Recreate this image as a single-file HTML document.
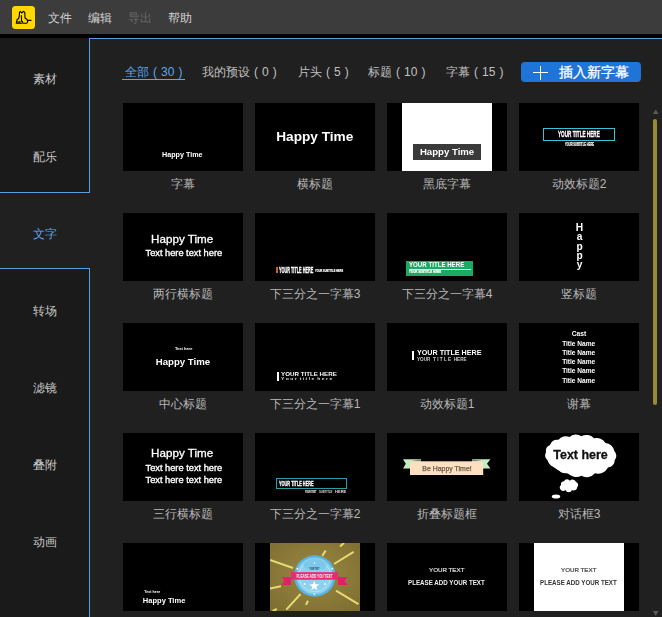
<!DOCTYPE html>
<html><head><meta charset="utf-8">
<style>
*{margin:0;padding:0;box-sizing:border-box}
html,body{width:662px;height:617px;overflow:hidden;background:#202020;font-family:"Liberation Sans",sans-serif;position:relative}
.a{position:absolute}
#menubar{left:0;top:0;width:662px;height:34px;background:#3c3c3c}
#blackstrip{left:0;top:34px;width:662px;height:4px;background:#000}
#side{left:0;top:38px;width:89px;height:579px;background:#1a1a1a}
.mi{position:absolute;top:12px;font-size:12px;line-height:12px;color:#d2d2d2;white-space:nowrap}
.si{position:absolute;left:0;width:89px;text-align:center;font-size:12px;line-height:12px;color:#c8c8c8}
.bl{position:absolute;background:#5a9edc}
.tab{position:absolute;top:66px;word-spacing:0.7px;font-size:12px;line-height:12px;color:#c0c0c0;white-space:nowrap}
.th{position:absolute;width:120px;height:68px;background:#000;overflow:hidden}
.tt{position:absolute;filter:blur(0.35px);white-space:nowrap;transform-origin:0 0;font-family:"Liberation Sans",sans-serif}
.cap{position:absolute;width:120px;text-align:center;font-size:12px;line-height:12px;color:#b8b8b8;white-space:nowrap}
</style></head><body>
<div id="menubar" class="a"></div>
<div id="blackstrip" class="a"></div>
<!-- logo -->
<div class="a" style="left:12px;top:6px;width:23.4px;height:23.4px;background:#ffd800;border-radius:3.5px"></div>
<div class="mi" style="left:48px">文件</div>
<div class="mi" style="left:88px">编辑</div>
<div class="mi" style="left:128px;color:#6a6a6a">导出</div>
<div class="mi" style="left:168px">帮助</div>

<div id="side" class="a"></div>
<div class="a" style="left:0;top:193px;width:89px;height:75px;background:#202020"></div>
<div class="bl" style="left:89px;top:38px;width:573px;height:1px"></div>
<div class="bl" style="left:89px;top:38px;width:1px;height:155px"></div>
<div class="bl" style="left:0;top:192px;width:90px;height:1px"></div>
<div class="bl" style="left:0;top:268px;width:90px;height:1px"></div>
<div class="bl" style="left:89px;top:268px;width:1px;height:349px"></div>

<div class="si" style="top:73px">素材</div>
<div class="si" style="top:151px">配乐</div>
<div class="si" style="top:228px;color:#5aa8ec">文字</div>
<div class="si" style="top:305px">转场</div>
<div class="si" style="top:382px">滤镜</div>
<div class="si" style="top:459px">叠附</div>
<div class="si" style="top:536px">动画</div>

<div class="tab" style="left:125px;color:#5aa8ec">全部 ( 30 )</div>
<div class="a" style="left:122px;top:79px;width:63px;height:1px;background:#5aa8ec"></div>
<div class="tab" style="left:202px">我的预设 ( 0 )</div>
<div class="tab" style="left:298px">片头 ( 5 )</div>
<div class="tab" style="left:368px">标题 ( 10 )</div>
<div class="tab" style="left:446px">字幕 ( 15 )</div>

<div class="a" style="left:521px;top:62px;width:120px;height:20px;background:#1f74d8;border-radius:4px"></div>

<!-- thumbnails -->
<div class="th" style="left:123px;top:103px"></div>
<div class="th" style="left:255px;top:103px"></div>
<div class="th" style="left:387px;top:103px"></div>
<div class="th" style="left:519px;top:103px"></div>
<div class="th" style="left:123px;top:213px"></div>
<div class="th" style="left:255px;top:213px"></div>
<div class="th" style="left:387px;top:213px"></div>
<div class="th" style="left:519px;top:213px"></div>
<div class="th" style="left:123px;top:323px"></div>
<div class="th" style="left:255px;top:323px"></div>
<div class="th" style="left:387px;top:323px"></div>
<div class="th" style="left:519px;top:323px"></div>
<div class="th" style="left:123px;top:433px"></div>
<div class="th" style="left:255px;top:433px"></div>
<div class="th" style="left:387px;top:433px"></div>
<div class="th" style="left:519px;top:433px"></div>
<div class="th" style="left:123px;top:543px"></div>
<div class="th" style="left:255px;top:543px"></div>
<div class="th" style="left:387px;top:543px"></div>
<div class="th" style="left:519px;top:543px"></div>

<div class="cap" style="left:123px;top:178px">字幕</div>
<div class="cap" style="left:255px;top:178px">横标题</div>
<div class="cap" style="left:387px;top:178px">黑底字幕</div>
<div class="cap" style="left:519px;top:178px">动效标题2</div>
<div class="cap" style="left:123px;top:288px">两行横标题</div>
<div class="cap" style="left:255px;top:288px">下三分之一字幕3</div>
<div class="cap" style="left:387px;top:288px">下三分之一字幕4</div>
<div class="cap" style="left:519px;top:288px">竖标题</div>
<div class="cap" style="left:123px;top:398px">中心标题</div>
<div class="cap" style="left:255px;top:398px">下三分之一字幕1</div>
<div class="cap" style="left:387px;top:398px">动效标题1</div>
<div class="cap" style="left:519px;top:398px">谢幕</div>
<div class="cap" style="left:123px;top:508px">三行横标题</div>
<div class="cap" style="left:255px;top:508px">下三分之一字幕2</div>
<div class="cap" style="left:387px;top:508px">折叠标题框</div>
<div class="cap" style="left:519px;top:508px">对话框3</div>


<!-- thumbnail shapes -->
<div class="a" style="left:402px;top:103px;width:90px;height:68px;background:#fff"></div>
<div class="a" style="left:413px;top:144px;width:68px;height:15.5px;background:#3a3a3a"></div>
<div class="a" style="left:543px;top:127.6px;width:72.4px;height:13.2px;border:1.6px solid #3cc0d8"></div>
<div class="a" style="left:276px;top:267px;width:2px;height:6px;background:#c8602a"></div>
<div class="a" style="left:406px;top:260.5px;width:67px;height:15.5px;background:#1caa62"></div>
<div class="a" style="left:409px;top:268.6px;width:62px;height:1px;background:#e8f8ee"></div>
<div class="a" style="left:277px;top:372px;width:2px;height:9px;background:#fff"></div>
<div class="a" style="left:412px;top:350.5px;width:2px;height:9.5px;background:#fff"></div>
<div class="a" style="left:276.3px;top:478.2px;width:70.7px;height:10.4px;border:1.6px solid #2a9caa"></div>
<svg class="a" style="left:400px;top:452px" width="95" height="28" viewBox="0 0 95 28">
 <polygon points="3,7.2 21,7.2 21,16.5 3,16.5 5.8,11.8" fill="#c4ecc4"/>
 <polygon points="72,7.2 90.4,7.2 87,11.8 90.4,16.5 72,16.5" fill="#c4ecc4"/>
 <polygon points="10,9.3 21,7.2 21,9.3" fill="#7a8a70"/>
 <polygon points="72,7.2 83.2,9.3 72,9.3" fill="#7a8a70"/>
 <rect x="10" y="9.3" width="73.2" height="13.7" fill="#fde0c2"/>
</svg>
<svg class="a" style="left:539px;top:433px" width="85" height="68" viewBox="0 0 85 68">
 <g fill="#fff">
 <ellipse cx="41.5" cy="23" rx="33" ry="19"/>
 <path d="M7,19.3 A6.66,6.66 0 0 1 11,12 A7.97,7.97 0 0 1 19.5,6.8 A9.08,9.08 0 0 1 30.5,4 A9.54,9.54 0 0 1 42.4,3.3 A10.21,10.21 0 0 1 55,5.3 A9.94,9.94 0 0 1 66.5,10 A9.51,9.51 0 0 1 75.3,18 A7.21,7.21 0 0 1 75.8,27 A8.10,8.10 0 0 1 69,34.5 A11.39,11.39 0 0 1 56,40.3 A11.06,11.06 0 0 1 42.4,42.8 A11.34,11.34 0 0 1 28.5,40 A9.84,9.84 0 0 1 17.5,34.5 A9.00,9.00 0 0 1 8.7,27.5 A6.70,6.70 0 0 1 7,19.3 Z"/>
 <path d="M22,52 A3,3 0 0 1 25,48.2 A3.5,3.5 0 0 1 31,47.8 A3.5,3.5 0 0 1 37,49 A3,3 0 0 1 38.3,54 A3.5,3.5 0 0 1 33,57 A3.5,3.5 0 0 1 26.5,57 A3,3 0 0 1 22,52 Z"/>
 <ellipse cx="17" cy="63.5" rx="4.2" ry="2.1"/>
 </g>
</svg>
<svg class="a" style="left:270px;top:543px" width="90" height="68" viewBox="0 0 90 68">
 <defs><radialGradient id="og" cx="50%" cy="45%" r="70%"><stop offset="0" stop-color="#9a8840"/><stop offset="1" stop-color="#7e6e32"/></radialGradient></defs>
 <rect width="90" height="68" fill="url(#og)"/>
 <g stroke="#e4dc72" stroke-width="2" stroke-linecap="butt">
  <line x1="64" y1="21" x2="83.6" y2="8.8"/>
  <line x1="52.3" y1="12.9" x2="55.7" y2="7.5"/>
  <line x1="70" y1="3.4" x2="74" y2="0"/>
  <line x1="0" y1="17" x2="23" y2="25"/>
  <line x1="0" y1="45.5" x2="10.9" y2="43.2"/>
  <line x1="16.3" y1="66.6" x2="30.6" y2="51"/>
  <line x1="36" y1="61.9" x2="38" y2="57.8"/>
  <line x1="66" y1="47.6" x2="88.4" y2="61.2"/>
  <line x1="2.7" y1="68" x2="6.8" y2="66"/>
 </g>
 <circle cx="44.8" cy="33" r="20.7" fill="#5ab6e0"/>
 <circle cx="44.8" cy="33" r="18.3" fill="#8cd2ee"/>
 <circle cx="44.8" cy="33" r="15.8" fill="none" stroke="#d8f2fc" stroke-width="0.5"/>
 <path d="M33,21.5 A15,15 0 0 1 56.6,21.5 L54,26 H35.6 Z" fill="#7cc8ea"/>
 <g fill="#fff"><circle cx="27.3" cy="25.6" r="0.9"/><circle cx="62.3" cy="25.6" r="0.9"/><circle cx="34.6" cy="41" r="0.9"/><circle cx="55" cy="41" r="0.9"/><circle cx="44.3" cy="20" r="0.7"/><circle cx="44.3" cy="51.2" r="0.8"/></g>
 <polygon points="11.6,34 21,34 21,42 11.6,42 14.5,38" fill="#e0206a"/>
 <polygon points="68,34 77.5,34 74.6,38 77.5,42 68,42" fill="#e0206a"/>
 <rect x="21" y="29.2" width="47" height="7.5" fill="#ea2a72"/>
 <polygon points="44.30,37.80 45.59,41.22 49.25,41.39 46.39,43.68 47.36,47.21 44.30,45.20 41.24,47.21 42.21,43.68 39.35,41.39 43.01,41.22" fill="#fff"/>
 <text x="44.5" y="35" font-family="Liberation Sans" font-weight="bold" font-size="4.6" fill="#fff" text-anchor="middle" textLength="36" lengthAdjust="spacingAndGlyphs">PLEASE ADD YOU TEXT</text>
 <text x="44.3" y="26.6" font-family="Liberation Sans" font-weight="bold" font-size="2.6" fill="#2a3440" text-anchor="middle" textLength="10" lengthAdjust="spacingAndGlyphs">YOUR TEXT</text>
</svg>
<div class="a" style="left:534px;top:543px;width:90px;height:68px;background:#fff"></div>

<!-- logo icon -->
<svg class="a" style="left:10px;top:4px" width="28" height="27" viewBox="0 0 28 27">
 <g fill="none" stroke="#000" stroke-width="1.1" stroke-linejoin="round" stroke-linecap="round">
  <path d="M6.3,19.3 H11.5 M6.3,19.3 L7,15.8 L8.6,14.5 L9.3,12 L9.5,8.5 L10.3,7.3 L11.6,9 L13.5,7.3 L14.8,8.5 L15,14 L17,15.5 L17.8,17.8 L16.8,19.3 L13,19.3 L12.2,17.5"/>
  <path d="M11.3,11.5 L11.6,17.6 M17.8,16.4 H21 M8,17.2 V18.8 M9.8,17.2 V18.8"/>
 </g>
</svg>
<!-- button content -->
<div class="a" style="left:533px;top:72px;width:15px;height:1px;background:#fff"></div>
<div class="a" style="left:540px;top:65.5px;width:1px;height:14px;background:#fff"></div>
<div class="a" style="left:559px;top:65px;font-size:14px;line-height:14px;color:#fff;-webkit-text-stroke:0.3px #fff;white-space:nowrap">插入新字幕</div>
<!-- scrollbar -->
<svg class="a" style="left:650px;top:105px" width="12" height="12" viewBox="0 0 12 12"><polygon points="3,9 5.75,4.5 8.5,9" fill="#5a5a5a"/></svg>
<div class="a" style="left:653px;top:119px;width:4px;height:286px;background:#9a8838;border-radius:2px"></div>
<svg class="a" style="left:650px;top:607px" width="12" height="10" viewBox="0 0 12 10"><polygon points="3,4 8.5,4 5.75,9" fill="#5a5a5a"/></svg>
<!-- vertical happy -->
<div class="tt" style="left:574.5px;top:223.2px;width:10px;text-align:center;font-size:10.2px;line-height:10px;font-weight:bold;color:#fff">H</div>
<div class="tt" style="left:574.5px;top:232.4px;width:10px;text-align:center;font-size:10.2px;line-height:10px;font-weight:bold;color:#fff">a</div>
<div class="tt" style="left:574.5px;top:241.6px;width:10px;text-align:center;font-size:10.2px;line-height:10px;font-weight:bold;color:#fff">p</div>
<div class="tt" style="left:574.5px;top:250.8px;width:10px;text-align:center;font-size:10.2px;line-height:10px;font-weight:bold;color:#fff">p</div>
<div class="tt" style="left:574.5px;top:260px;width:10px;text-align:center;font-size:10.2px;line-height:10px;font-weight:bold;color:#fff">y</div>
<div class="tt" style="left:162.07px;top:151.63px;font-size:7.17px;line-height:7.17px;font-weight:bold;color:#fff;">Happy Time</div>
<div class="tt" style="left:276.18px;top:129.74px;font-size:13.66px;line-height:13.66px;font-weight:bold;color:#fff;">Happy Time</div>
<div class="tt" style="left:419.92px;top:146.86px;font-size:9.62px;line-height:9.62px;font-weight:bold;color:#fff;">Happy Time</div>
<div class="tt" style="left:558.45px;top:130.18px;font-size:9.00px;line-height:9.00px;font-weight:bold;color:#fff;transform:scaleX(0.515);-webkit-text-stroke:0.35px #fff;">YOUR TITLE HERE</div>
<div class="tt" style="left:564.97px;top:142.83px;font-size:4.57px;line-height:4.57px;font-weight:bold;color:#fff;transform:scaleX(0.573);-webkit-text-stroke:0.2px #fff;">YOUR SUBTITLE HERE</div>
<div class="tt" style="left:151.07px;top:232.64px;font-size:11.65px;line-height:11.65px;font-weight:normal;color:#fff;-webkit-text-stroke:0.3px #fff;">Happy Time</div>
<div class="tt" style="left:145.51px;top:249.17px;font-size:9.25px;line-height:9.25px;font-weight:normal;color:#fff;-webkit-text-stroke:0.35px #fff;">Text here text here</div>
<div class="tt" style="left:278.86px;top:265.74px;font-size:8.57px;line-height:8.57px;font-weight:bold;color:#fff;transform:scaleX(0.444);-webkit-text-stroke:0.35px #fff;">YOUR TITLE HERE</div>
<div class="tt" style="left:314.97px;top:269.37px;font-size:4.29px;line-height:4.29px;font-weight:bold;color:#fff;transform:scaleX(0.590);-webkit-text-stroke:0.2px #fff;">YOUR SUBTITLE HERE</div>
<div class="tt" style="left:408.94px;top:262.18px;font-size:6.29px;line-height:6.29px;font-weight:bold;color:#fff;transform:scaleX(0.977);">YOUR TITLE HERE</div>
<div class="tt" style="left:408.97px;top:270.37px;font-size:4.29px;line-height:4.29px;font-weight:bold;color:#fff;transform:scaleX(0.675);-webkit-text-stroke:0.2px #fff;">YOUR SUBTITLE HERE</div>
<div class="tt" style="left:174.96px;top:347.12px;font-size:3.99px;line-height:3.99px;font-weight:bold;color:#fff;">Text here</div>
<div class="tt" style="left:155.72px;top:356.53px;font-size:9.65px;line-height:9.65px;font-weight:bold;color:#fff;">Happy Time</div>
<div class="tt" style="left:280.64px;top:371.53px;font-size:5.29px;line-height:5.29px;font-weight:bold;color:#fff;transform:scaleX(1.175);">YOUR TITLE HERE</div>
<div class="tt" style="left:280.65px;top:377.29px;font-size:4.38px;line-height:4.38px;font-weight:bold;color:#ddd;transform:scaleX(1.168);">Y o u r&nbsp; t i t l e&nbsp; h e r e</div>
<div class="tt" style="left:417.33px;top:349.29px;font-size:7.57px;line-height:7.57px;font-weight:bold;color:#fff;transform:scaleX(0.947);">YOUR TITLE HERE</div>
<div class="tt" style="left:416.95px;top:357.40px;font-size:5.43px;line-height:5.43px;font-weight:bold;color:#ccc;transform:scaleX(0.859);">YOUR&nbsp; T I T L E&nbsp; HERE</div>
<div class="tt" style="left:571.73px;top:330.80px;font-size:6.73px;line-height:6.73px;font-weight:bold;color:#fff;">Cast</div>
<div class="tt" style="left:562.13px;top:341.13px;font-size:6.58px;line-height:6.58px;font-weight:bold;color:#fff;">Title Name</div>
<div class="tt" style="left:562.13px;top:350.33px;font-size:6.58px;line-height:6.58px;font-weight:bold;color:#fff;">Title Name</div>
<div class="tt" style="left:562.13px;top:359.33px;font-size:6.58px;line-height:6.58px;font-weight:bold;color:#fff;">Title Name</div>
<div class="tt" style="left:562.13px;top:368.33px;font-size:6.58px;line-height:6.58px;font-weight:bold;color:#fff;">Title Name</div>
<div class="tt" style="left:562.13px;top:377.53px;font-size:6.58px;line-height:6.58px;font-weight:bold;color:#fff;">Title Name</div>
<div class="tt" style="left:151.07px;top:447.14px;font-size:11.65px;line-height:11.65px;font-weight:normal;color:#fff;-webkit-text-stroke:0.3px #fff;">Happy Time</div>
<div class="tt" style="left:145.51px;top:464.15px;font-size:9.28px;line-height:9.28px;font-weight:normal;color:#fff;-webkit-text-stroke:0.35px #fff;">Text here text here</div>
<div class="tt" style="left:145.51px;top:476.35px;font-size:9.28px;line-height:9.28px;font-weight:normal;color:#fff;-webkit-text-stroke:0.35px #fff;">Text here text here</div>
<div class="tt" style="left:279.26px;top:479.57px;font-size:7.71px;line-height:7.71px;font-weight:bold;color:#fff;transform:scaleX(0.498);-webkit-text-stroke:0.35px #fff;">YOUR TITLE HERE</div>
<div class="tt" style="left:304.88px;top:490.73px;font-size:3.86px;line-height:3.86px;font-weight:bold;color:#ddd;transform:scaleX(0.513);-webkit-text-stroke:0.2px #ddd;">YOUR TEXT</div>
<div class="tt" style="left:319.25px;top:490.73px;font-size:3.86px;line-height:3.86px;font-weight:bold;color:#ddd;transform:scaleX(0.708);">SUBTITLE</div>
<div class="tt" style="left:335.26px;top:490.73px;font-size:3.86px;line-height:3.86px;font-weight:bold;color:#ddd;transform:scaleX(1.054);">HERE</div>
<div class="tt" style="left:422.34px;top:466.12px;font-size:6.95px;line-height:6.95px;font-weight:normal;color:#6a5a48;-webkit-text-stroke:0.25px #6a5a48;">Be Happy Time!</div>
<div class="tt" style="left:553.28px;top:448.74px;font-size:12.48px;line-height:12.48px;font-weight:bold;color:#111;-webkit-text-stroke:0.3px #111;">Text here</div>
<div class="tt" style="left:144.36px;top:590.72px;font-size:3.64px;line-height:3.64px;font-weight:bold;color:#fff;">Text here</div>
<div class="tt" style="left:142.85px;top:597.03px;font-size:7.53px;line-height:7.53px;font-weight:bold;color:#fff;">Happy Time</div>
<div class="tt" style="left:429.48px;top:568.16px;font-size:5.71px;line-height:5.71px;font-weight:normal;color:#ddd;transform:scaleX(1.090);-webkit-text-stroke:0.2px #ddd;">YOUR TEXT</div>
<div class="tt" style="left:408.03px;top:580.06px;font-size:6.43px;line-height:6.43px;font-weight:bold;color:#eee;transform:scaleX(0.965);">PLEASE ADD YOUR TEXT</div>
<div class="tt" style="left:561.48px;top:568.16px;font-size:5.71px;line-height:5.71px;font-weight:normal;color:#444;transform:scaleX(1.090);-webkit-text-stroke:0.2px #444;">YOUR TEXT</div>
<div class="tt" style="left:540.03px;top:580.06px;font-size:6.43px;line-height:6.43px;font-weight:bold;color:#333;transform:scaleX(0.965);">PLEASE ADD YOUR TEXT</div>
</body></html>
